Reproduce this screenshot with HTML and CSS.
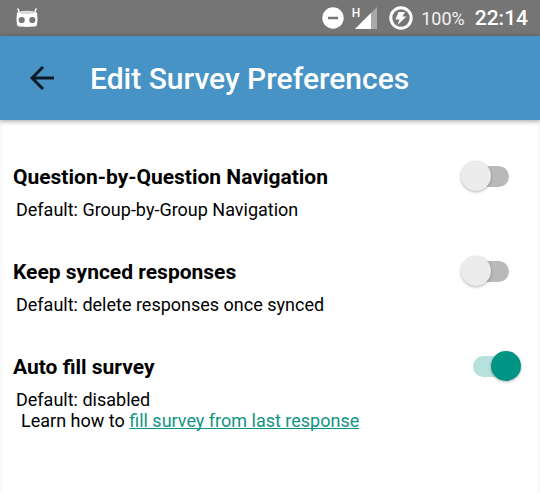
FILE: index.html
```
<!DOCTYPE html>
<html lang="en">
<head>
  <meta charset="UTF-8" />
  <meta name="viewport" content="width=device-width, initial-scale=1.0" />
  <title>Edit Survey Preferences</title>
  <link rel="stylesheet" href="styles.css">
</head>
<body>
<div class="status">
  <svg class="status-bot" width="22" height="20" viewBox="0 0 22 20">
    <path d="M2 1l1.500 4M20 1l-1.500 4" stroke="#fff" stroke-width="1.500" stroke-linecap="round" />
    <path d="M1 4.500Q11 1 21 4.500Q22 11 21 17Q20.500 18.500 18 18.600Q11 19.400 4 18.600Q1.500 18.500 1 17Q0 11 1 4.500z" fill="#fff" />
    <path d="M2 4.600Q11 1.500 20 4.600Q19 6 11 6T2 4.600z" fill="#d8d8d8" />
    <circle cx="5.700" cy="12" r="3.100" fill="#757575" />
    <circle cx="16.300" cy="12" r="3.100" fill="#757575" />
  </svg>
  <svg width="22" height="22" viewBox="0 0 22 22">
    <circle cx="11" cy="11" r="10.700" fill="#fff" />
    <path d="M6 11h10" stroke="#757575" stroke-width="2.500" />
  </svg>
  <div class="signal">
    <span>H</span>
    <svg width="22" height="22" viewBox="0 0 22 22">
      <path d="M22 0v22H0z" fill="#a9a9a9" />
      <path d="M16 6v16H0z" fill="#fff" />
    </svg>
  </div>
  <svg width="24" height="24" viewBox="0 0 24 24">
    <circle cx="12" cy="12" r="10.200" fill="none" stroke="#fff" stroke-width="3" />
    <path d="M9.500 6h6.500l-2.500 4.500h4L8.500 19l2-5.500H6.500z" fill="#fff" />
  </svg>
  <span class="battery">100%</span>
  <span class="clock">22:14</span>
</div>
<header>
  <button type="button" class="back" aria-label="Back">
    <svg width="24" height="24" viewBox="0 0 24 24" fill="none" stroke="#0b1a26" stroke-width="3">
      <path d="M13 1L2 12l11 11M2 12h22" />
    </svg>
  </button>
  <h1>Edit Survey Preferences</h1>
</header>
<main>
  <div class="pref">
    <div>
      <label for="question-nav">Question-by-Question Navigation</label>
      <p>Default: Group-by-Group Navigation</p>
    </div>
    <input type="checkbox" class="switch" id="question-nav" />
  </div>
  <div class="pref">
    <div>
      <label for="keep-synced">Keep synced responses</label>
      <p>Default: delete responses once synced</p>
    </div>
    <input type="checkbox" class="switch" id="keep-synced" />
  </div>
  <div class="pref">
    <div>
      <label for="auto-fill">Auto fill survey</label>
      <p>Default: disabled</p>
      <p class="more">Learn how to <a href="#">fill survey from last response</a></p>
    </div>
    <input type="checkbox" class="switch" id="auto-fill" checked />
  </div>
</main>
</body>
</html>
```
FILE: styles.css
```
* {
  box-sizing: border-box;
  margin: 0;
  padding: 0;
}
body {
  display: flex;
  flex-direction: column;
  min-height: 100vh;
  background: #f9f9f9;
  color: #000;
  font-family: Roboto, sans-serif;
}
.status {
  display: flex;
  align-items: center;
  height: 36px;
  padding: 0 12px 0 16px;
  background: #757575;
  color: #fff;
}
.status-bot {
  margin-right: auto;
}
.signal {
  display: flex;
  margin: 0 12px 0 8px;
}
.signal span {
  margin-right: -5px;
  font-size: 12px;
  font-weight: 500;
  line-height: 12px;
}
.battery {
  margin: 0 10px 0 8px;
  font-size: 18px;
  color: #f2f2f2;
}
.clock {
  font-size: 21px;
  font-weight: 500;
}
header {
  display: flex;
  align-items: center;
  height: 84px;
  padding: 0 24px;
  background: #4793c5;
  box-shadow: 0 1px 5px rgba(0, 0, 0, 0.4);
  color: #fff;
  position: relative;
}
.back {
  display: flex;
  padding: 6px;
  margin-right: 30px;
  border: 0;
  background: none;
}
h1 {
  font-size: 30px;
  font-weight: 500;
}
main {
  flex: 1;
  margin: 0 3px;
  padding: 41px 16px 36px 10px;
  background: #fff;
}
.pref {
  display: flex;
  align-items: flex-start;
  justify-content: space-between;
  margin-bottom: 36px;
}
.pref label {
  display: block;
  margin-bottom: 6px;
  font-size: 21px;
  font-weight: bold;
  line-height: 32px;
}
.pref p {
  padding-left: 3px;
  font-size: 18px;
  line-height: 21px;
}
.pref .more {
  padding-left: 8px;
}
.pref a {
  color: #109485;
  text-decoration-skip-ink: none;
}
.switch {
  appearance: none;
  flex: none;
  display: flex;
  align-items: center;
  width: 60px;
  height: 30px;
}
.switch::before {
  content: "";
  width: 36px;
  height: 21px;
  margin-left: 12px;
  border-radius: 11px;
  background: #b9b9b9;
}
.switch::after {
  content: "";
  width: 30px;
  height: 30px;
  margin-left: -48px;
  border-radius: 50%;
  background: #ececec;
  box-shadow: 0 1px 3px rgba(0, 0, 0, 0.3);
}
.switch:checked::before {
  background: #b7e1dc;
}
.switch:checked::after {
  margin-left: -18px;
  background: #009485;
}
```
